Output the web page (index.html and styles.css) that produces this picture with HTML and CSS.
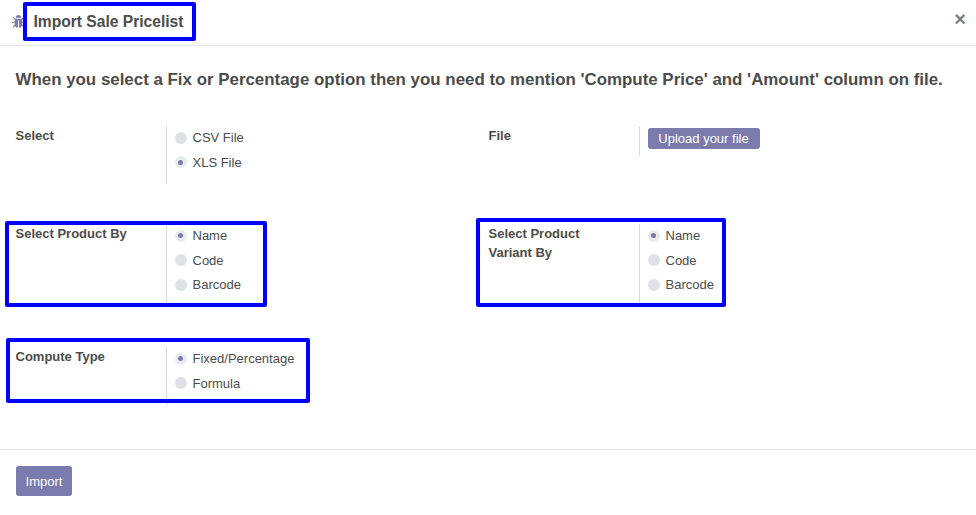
FILE: index.html
```
<!DOCTYPE html>
<html lang="en">
<head>
<meta charset="utf-8">
<title>Import Sale Pricelist</title>
<link rel="stylesheet" href="styles.css">
</head>
<body>
<div class="dialog">
  <header class="header">
    <svg class="bug" viewBox="0 0 12 12" fill="none" stroke="#7c7bad">
      <path d="M3.500 2.600a2.500 2.600 0 0 1 5 0z" fill="#7c7bad" stroke="none"/>
      <path d="M2.500 3.500h7v4.700c0 2.100-1.200 3.300-3 3.500V5h-1v6.700C3.700 11.500 2.500 10.300 2.500 8.200z" fill="#7c7bad" stroke="none"/>
      <path d="M1.100 2.300l2 2M10.900 2.300l-2 2M0 6.700h3M12 6.700h-3M1.100 11.200l2-2.300M10.900 11.200l-2-2.300" stroke-width="1"/>
    </svg>
    <h4 class="title">Import Sale Pricelist</h4>
    <span class="close">×</span>
  </header>
  <main class="body">
    <h2 class="notice">When you select a Fix or Percentage option then you need to mention 'Compute Price' and 'Amount' column on file.</h2>
    <div class="grid">
      <section class="group">
        <div class="label">Select</div>
        <div class="field two">
          <div class="option"><i class="radio"></i>CSV File</div>
          <div class="option"><i class="radio on"></i>XLS File</div>
        </div>
      </section>
      <section class="group">
        <div class="label">File</div>
        <div class="field file"><button class="btn upload">Upload your file</button></div>
      </section>
      <section class="group">
        <div class="label">Select Product By</div>
        <div class="field three">
          <div class="option"><i class="radio on"></i>Name</div>
          <div class="option"><i class="radio"></i>Code</div>
          <div class="option"><i class="radio"></i>Barcode</div>
        </div>
      </section>
      <section class="group">
        <div class="label">Select Product Variant By</div>
        <div class="field three">
          <div class="option"><i class="radio on"></i>Name</div>
          <div class="option"><i class="radio"></i>Code</div>
          <div class="option"><i class="radio"></i>Barcode</div>
        </div>
      </section>
      <section class="group">
        <div class="label">Compute Type</div>
        <div class="field two">
          <div class="option"><i class="radio on"></i>Fixed/Percentage</div>
          <div class="option"><i class="radio"></i>Formula</div>
        </div>
      </section>
    </div>
  </main>
  <footer class="footer"><button class="btn import">Import</button></footer>
  <div class="mark mark-title"></div>
  <div class="mark mark-product"></div>
  <div class="mark mark-variant"></div>
  <div class="mark mark-compute"></div>
</div>
</body>
</html>
```
FILE: styles.css
```
* { box-sizing: border-box; }
body {
  margin: 0;
  background: #fff;
  color: #4c4c4c;
  font: 13px/19.5px "Liberation Sans", Arial, sans-serif;
}
.dialog {
  position: relative;
  height: 515px;
  display: flex;
  flex-direction: column;
  overflow: hidden;
}
.header {
  display: flex;
  align-items: center;
  height: 46px;
  padding: 0 10px 3px 12px;
  border-bottom: 1px solid #e5e5e5;
}
.bug { width: 13px; height: 13px; margin-right: 8.5px; }
.title { margin: 0; padding-top: 2px; font-size: 15.6px; line-height: 24px; }
.close { margin-left: auto; font-size: 20px; font-weight: bold; line-height: 20px; color: #7f7f7f; padding-bottom: 4px; }
.body { height: 403px; padding: 24px 16px 0 15.5px; }
.notice { margin: 0 0 36px; font-size: 16.9px; line-height: 20px; white-space: nowrap; }
.grid {
  display: grid;
  grid-template-columns: 473px 1fr;
  grid-template-rows: 98px 123px 58px;
}
.group { display: grid; grid-template-columns: 150px 1fr; align-items: start; }
.label { font-weight: bold; line-height: 19px; padding-right: 20px; }
.field { border-left: 1px solid #d9d9d9; padding: 2px 0 0 8px; }
.two { height: 58px; }
.three { height: 80px; }
.file { height: 30px; }
.option { display: flex; align-items: center; height: 19.5px; margin-bottom: 5px; }
.radio {
  display: flex;
  align-items: center;
  justify-content: center;
  width: 12px;
  height: 12px;
  margin-right: 6px;
  border-radius: 50%;
  background: #dee2e6;
}
.radio.on { background: #e9ecef; }
.radio.on::before { content: ""; width: 5px; height: 5px; margin-right: 1px; border-radius: 50%; background: #7c7bad; }
.btn {
  display: block;
  border: 0;
  border-radius: 3px;
  padding: 0;
  background: #7c7bad;
  color: #fff;
  font: 13px/19px "Liberation Sans", Arial, sans-serif;
}
.upload { width: 112px; height: 21px; }
.footer { flex: 1; border-top: 1px solid #e5e5e5; padding: 16px; }
.import { width: 56px; height: 30px; }
.mark { position: absolute; border: 4px solid #00f; border-radius: 2px; }
.mark-title { left: 23px; top: 2px; width: 173px; height: 39px; }
.mark-product { left: 5px; top: 221px; width: 262px; height: 86px; }
.mark-variant { left: 476px; top: 218px; width: 250px; height: 89px; }
.mark-compute { left: 6px; top: 338px; width: 304px; height: 65px; }
```
